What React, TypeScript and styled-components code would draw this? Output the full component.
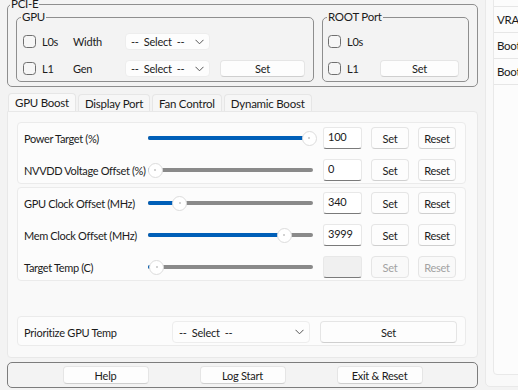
import React from 'react';
import styled, {createGlobalStyle} from 'styled-components';

const GlobalStyle = createGlobalStyle`
  * { box-sizing: border-box; }
  html, body { margin: 0; padding: 0; background: #f3f3f3; }
  body {
    font-family: Lato, "Noto Sans", sans-serif;
    font-size: 11px;
    letter-spacing: -0.25px;
    color: #1b1b1b;
  }
  #root { width: 518px; height: 390px; overflow: hidden; }
`

const Page = styled.div`
  display: flex;
  gap: 7px;
  padding-left: 7px;
  height: 390px;
  overflow: hidden;
`

const LeftColumn = styled.div`
  width: 471px;
  flex: none;
  display: flex;
  flex-direction: column;
`

const GroupBox = styled.fieldset<{$width: number}>`
  width: ${p => p.$width}px;
  margin: 0;
  padding: 0;
  border: 1px solid #8e8e8e;
  border-radius: 5px;
  min-width: 0;
`

const Legend = styled.legend<{$inset?: number}>`
  margin-left: ${p => p.$inset ?? 4}px;
  padding: 0 1px;
  line-height: 14px;
  font-size: 11.5px;
`

const PciGroup = styled(GroupBox)`
  margin-top: -3px;
`

const PciBody = styled.div`
  display: flex;
  gap: 8px;
  padding: 0 8px 4px 8px;
`

const InnerGroup = styled(GroupBox)`
  margin-top: -1px;
`

const GpuGrid = styled.div`
  display: grid;
  grid-template-columns: 50px 52px 95px 85px;
  grid-auto-rows: 17px;
  row-gap: 10px;
  align-items: center;
  padding: 9px 0 4px 6px;
`

const RootGrid = styled.div`
  display: grid;
  grid-template-columns: 52px 79px;
  grid-auto-rows: 17px;
  row-gap: 10px;
  align-items: center;
  padding: 9px 0 4px 5px;
`

const CheckLabel = styled.label`
  display: flex;
  align-items: center;
  gap: 6px;
  grid-column: 1;
`

const Box = styled.span`
  width: 13px;
  height: 13px;
  border: 1px solid #6f6f6f;
  border-radius: 3.5px;
  background: #f6f6f6;
  flex: none;
`

const Select = styled.div<{$width: number; $height: number; $pad?: number}>`
  width: ${p => p.$width}px;
  height: ${p => p.$height}px;
  display: flex;
  align-items: center;
  justify-content: space-between;
  padding: 0 5px 0 ${p => p.$pad ?? 5}px;
  background: #fdfdfd;
  border: 1px solid #ededed;
  border-radius: 4px;
  white-space: pre;
`

const Button = styled.button<{$width?: number; $height?: number; $disabled?: boolean}>`
  width: ${p => (p.$width ? `${p.$width}px` : '100%')};
  height: ${p => p.$height ?? 22}px;
  padding: 0;
  font: inherit;
  letter-spacing: inherit;
  color: ${p => (p.$disabled ? '#a2a2a2' : '#1b1b1b')};
  background: ${p => (p.$disabled ? '#f9f9f9' : '#fdfdfd')};
  border: 1px solid #e5e5e5;
  border-bottom-color: ${p => (p.$disabled ? '#e5e5e5' : '#cfcfcf')};
  border-radius: 4px;
`

const TabRow = styled.div`
  display: flex;
  align-items: flex-end;
  gap: 2px;
  height: 18px;
  margin-top: 6px;
  padding-left: 1px;
`

const Tab = styled.div<{$active?: boolean}>`
  height: ${p => (p.$active ? 18 : 17)}px;
  display: flex;
  align-items: center;
  padding: 0 6px;
  font-size: 11.5px;
  background: ${p => (p.$active ? '#f9f9f9' : '#f6f6f6')};
  border: 1px solid #e6e6e6;
  border-bottom: none;
  border-radius: 4px 4px 0 0;
`

const TabPanel = styled.div`
  height: 247px;
  background: #f9f9f9;
  border: 1px solid #e8e8e8;
  border-radius: 0 4px 4px 4px;
  padding: 10px 11px 0 9px;
  display: flex;
  flex-direction: column;
  gap: 3px;
`

const Card = styled.div<{$gapBefore?: number}>`
  background: #fcfcfc;
  border: 1px solid #ebebeb;
  border-radius: 4px;
  padding: 3px 0 1px 6px;
  display: flex;
  flex-direction: column;
  gap: 8px;
  margin-top: ${p => p.$gapBefore ?? 0}px;
`

const SliderRow = styled.div`
  display: grid;
  grid-template-columns: 115px 166px 39px 38px 38px;
  column-gap: 9px;
  height: 24px;
  align-items: center;
  white-space: nowrap;
`

const SliderLabel = styled.span`
  letter-spacing: -0.35px;
`

const Track = styled.div`
  position: relative;
  width: 165px;
  height: 4px;
  border-radius: 2px;
  background: #8a8a8a;
`

const Fill = styled.div`
  height: 100%;
  border-radius: 2px;
  background: #005fb8;
`

const Thumb = styled.div`
  position: absolute;
  top: 50%;
  width: 15px;
  height: 15px;
  margin: -7.5px 0 0 -7.5px;
  border-radius: 50%;
  background: #ffffff;
  border: 1px solid #dcdcdc;
  &::after {
    content: '';
    position: absolute;
    left: 50%;
    top: 50%;
    width: 2px;
    height: 2px;
    margin: -1px 0 0 -1px;
    border-radius: 50%;
    background: #c4c4c4;
  }
`

const ValueInput = styled.input<{$disabled?: boolean}>`
  width: 39px;
  height: 22px;
  padding: 0 0 3px 4px;
  font: inherit;
  letter-spacing: inherit;
  color: #1b1b1b;
  background: ${p => (p.$disabled ? '#f0f0f0' : '#ffffff')};
  border: 1px solid #e8e8e8;
  border-bottom: 1px solid #7a7a7a;
  border-radius: 3px;
  outline: none;
`

const PriorityRow = styled.div`
  display: grid;
  grid-template-columns: 148px 148px 137px;
  height: 24px;
  align-items: center;
`

const BottomBar = styled.div`
  margin-top: 4px;
  height: 26px;
  border: 1px solid #7c7c7c;
  border-radius: 5px;
  display: flex;
  align-items: center;
  justify-content: center;
  gap: 51px;
  background: #f3f3f3;
`

const RightColumn = styled.div`
  width: 120px;
  flex: none;
  margin-top: -20px;
  height: 407px;
  background: #f9f9f9;
  border: 1px solid #e9e9e9;
  border-radius: 5px;
  padding: 8px 0 11px 7px;
`

const InfoPanel = styled.div`
  height: 100%;
  background: #fcfcfc;
  border: 1px solid #e9e9e9;
  border-radius: 4px;
`

const InfoRow = styled.div<{$height: number}>`
  height: ${p => p.$height}px;
  display: flex;
  align-items: center;
  padding-left: 3px;
  font-size: 11.5px;
  border-bottom: 1px solid #e6e6e6;
  white-space: nowrap;
`

const Chevron = () => (
  <svg width="9" height="6" viewBox="0 0 9 6">
    <path d="M0.5 0.8 L4.5 4.8 L8.5 0.8" fill="none" stroke="#555" strokeWidth="1" />
  </svg>
)

function Check({label}: {label: string}) {
  return (
    <CheckLabel>
      <Box />
      <span>{label}</span>
    </CheckLabel>
  )
}

type SliderItem = {label: string; value: number; text: string; disabled?: boolean}

function Slider({value}: {value: number}) {
  // thumb centre runs from 7px to 161px along the 165px track
  const center = 7 + value * 154
  return (
    <Track>
      <Fill style={{width: center}} />
      <Thumb style={{left: center}} />
    </Track>
  )
}

function Row({item}: {item: SliderItem}) {
  return (
    <SliderRow>
      <SliderLabel>{item.label}</SliderLabel>
      <Slider value={item.value} />
      <ValueInput readOnly value={item.text} $disabled={item.disabled} />
      <Button $disabled={item.disabled}>Set</Button>
      <Button $disabled={item.disabled}>Reset</Button>
    </SliderRow>
  )
}

const voltageRows: SliderItem[] = [
  {label: 'Power Target (%)', value: 1, text: '100'},
  {label: 'NVVDD Voltage Offset (%)', value: 0, text: '0'},
]

const clockRows: SliderItem[] = [
  {label: 'GPU Clock Offset (MHz)', value: 0.16, text: '340'},
  {label: 'Mem Clock Offset (MHz)', value: 0.84, text: '3999'},
  {label: 'Target Temp (C)', value: 0.01, text: '', disabled: true},
]

const tabs = ['GPU Boost', 'Display Port', 'Fan Control', 'Dynamic Boost']

export default function App() {
  return (
    <>
      <GlobalStyle />
      <Page>
        <LeftColumn>
          <PciGroup $width={471}>
            <Legend $inset={2}>PCI-E</Legend>
            <PciBody>
              <InnerGroup $width={298}>
                <Legend>GPU</Legend>
                <GpuGrid>
                  <Check label="L0s" />
                  <span>Width</span>
                  <Select $width={85} $height={17}>
                    <span>--  Select  --</span>
                    <Chevron />
                  </Select>
                  <span />
                  <Check label="L1" />
                  <span>Gen</span>
                  <Select $width={85} $height={17}>
                    <span>--  Select  --</span>
                    <Chevron />
                  </Select>
                  <Button $height={17}>Set</Button>
                </GpuGrid>
              </InnerGroup>
              <InnerGroup $width={147}>
                <Legend>ROOT Port</Legend>
                <RootGrid>
                  <Check label="L0s" />
                  <span />
                  <Check label="L1" />
                  <Button $height={17}>Set</Button>
                </RootGrid>
              </InnerGroup>
            </PciBody>
          </PciGroup>

          <TabRow>
            {tabs.map((t, i) => (
              <Tab key={t} $active={i === 0}>{t}</Tab>
            ))}
          </TabRow>
          <TabPanel>
            <Card>
              {voltageRows.map(r => <Row key={r.label} item={r} />)}
            </Card>
            <Card>
              {clockRows.map(r => <Row key={r.label} item={r} />)}
            </Card>
            <Card $gapBefore={32}>
              <PriorityRow>
                <span>Prioritize GPU Temp</span>
                <Select $width={138} $height={22} $pad={6}>
                  <span>--  Select  --</span>
                  <Chevron />
                </Select>
                <Button>Set</Button>
              </PriorityRow>
            </Card>
          </TabPanel>

          <BottomBar>
            <Button $width={86} $height={18}>Help</Button>
            <Button $width={86} $height={18}>Log Start</Button>
            <Button $width={86} $height={18}>Exit &amp; Reset</Button>
          </BottomBar>
        </LeftColumn>

        <RightColumn>
          <InfoPanel>
            <InfoRow $height={17} />
            <InfoRow $height={26}>VRAM Clock</InfoRow>
            <InfoRow $height={26}>Boot Clock</InfoRow>
            <InfoRow $height={26}>Boot Voltage</InfoRow>
          </InfoPanel>
        </RightColumn>
      </Page>
    </>
  )
}
